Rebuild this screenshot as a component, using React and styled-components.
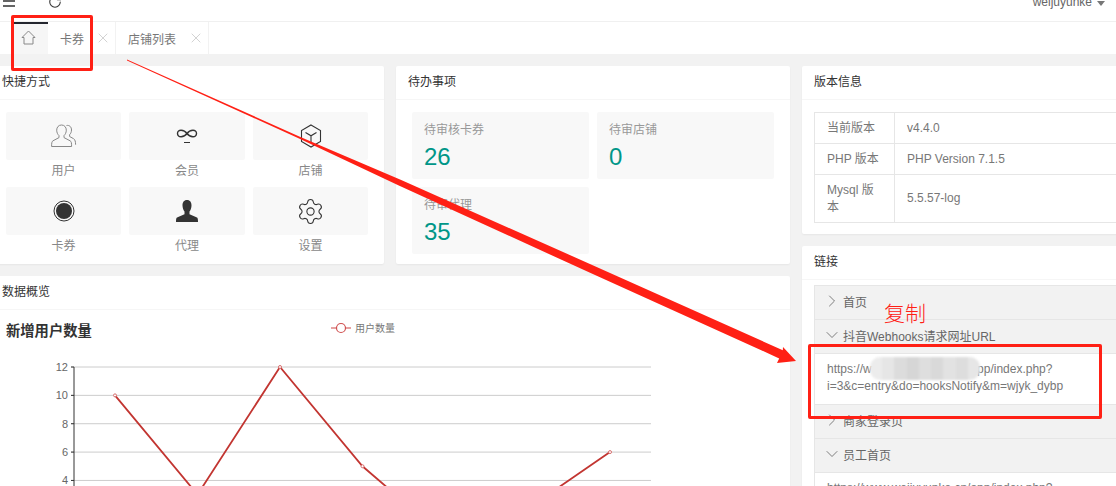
import React from "react";
import styled, { createGlobalStyle } from "styled-components";
import { RotateCw, Settings, X, ChevronRight, ChevronDown } from "lucide-react";

const GlobalStyle = createGlobalStyle`
  html, body {
    margin: 0;
    padding: 0;
    background: #f2f2f2;
  }
  body {
    font-family: "Liberation Sans", "Noto Sans CJK SC", sans-serif;
    font-size: 12px;
    color: #666;
  }
`;

const Page = styled.div`
  position: relative;
  width: 1116px;
  height: 486px;
  overflow: hidden;
  background: #f2f2f2;
`;

// 상단바
const TopBar = styled.div`
  display: flex;
  align-items: center;
  box-sizing: border-box;
  height: 22px;
  padding: 0 11px 18px 2px;
  background: #fff;
  border-bottom: 1px solid #f0f0f0;
`;

const Refresh = styled.span`
  display: flex;
  margin-left: 32px;
  color: #333;
`;

const UserName = styled.span`
  margin-left: auto;
  color: #666;
  line-height: 14px;
`;

const Caret = styled.i`
  width: 0;
  height: 0;
  margin: 3px 0 0 5px;
  border: 4px solid transparent;
  border-top: 5px solid #777;
  border-bottom: 0;
`;

// 탭
const TabBar = styled.div`
  display: flex;
  height: 32px;
  padding-left: 13px;
  background: #fff;
`;

const HomeTab = styled.div`
  display: flex;
  align-items: center;
  justify-content: center;
  box-sizing: border-box;
  width: 35px;
  padding: 0 5px 4px 0;
  background: #f6f6f6;
  border-top: 2px solid #23262e;
`;

const Tab = styled.div`
  display: flex;
  align-items: center;
  box-sizing: border-box;
  width: ${(p) => p.$width}px;
  padding: 0 4px 0 12px;
  border-right: 1px solid #f2f2f2;
  color: #777;
  svg {
    margin-left: auto;
    color: #c8c8c8;
  }
`;

// 본문
const Main = styled.div`
  display: grid;
  grid-template-columns: 800px 394px;
  gap: 12px;
  margin: 12px 0 0 -10px;
`;

const LeftArea = styled.div`
  display: grid;
  grid-template-columns: 394px 394px;
  grid-template-rows: 198px auto;
  gap: 12px;
`;

const RightArea = styled.div`
  display: flex;
  flex-direction: column;
  gap: 12px;
`;

const Card = styled.section`
  grid-column: ${(p) => (p.$wide ? "1 / 3" : "auto")};
  background: #fff;
  border-radius: 2px;
  box-shadow: 0 1px 2px rgba(0, 0, 0, 0.05);
`;

const CardTitle = styled.h2`
  box-sizing: border-box;
  height: 34px;
  margin: 0;
  padding: 0 12px;
  border-bottom: 1px solid #f6f6f6;
  color: #333;
  font-size: 12px;
  font-weight: 400;
  line-height: 32px;
`;

const ShortcutGrid = styled.div`
  display: grid;
  grid-template-columns: 115px 116px 115px;
  column-gap: 8px;
  row-gap: 5px;
  padding: 12px 16px 0;
`;

const Shortcut = styled.div`
  display: flex;
  flex-direction: column;
  color: #888;
  text-align: center;
  line-height: 22px;
`;

const ShortcutIcon = styled.div`
  display: flex;
  align-items: center;
  justify-content: center;
  height: 48px;
  background: #f8f8f8;
  border-radius: 2px;
`;

const TodoGrid = styled.div`
  display: grid;
  grid-template-columns: 177px 177px;
  gap: 8px;
  padding: 12px 16px 0;
`;

const TodoTile = styled.div`
  box-sizing: border-box;
  height: 67px;
  padding: 10px 12px 0;
  background: #f8f8f8;
  border-radius: 2px;
  color: #999;
  line-height: 17px;
`;

const TodoCount = styled.div`
  margin-top: 3px;
  color: #009688;
  font-size: 24px;
  line-height: 30px;
`;

const VersionBody = styled.div`
  padding: 12px 12px 11px;
`;

const VersionTable = styled.table`
  width: 100%;
  border-collapse: collapse;
  td {
    padding: 6.5px 12px;
    border: 1px solid #e6e6e6;
    line-height: 17px;
    color: #777;
  }
  td:first-child {
    width: 55px;
  }
`;

const LinkBody = styled.div`
  padding: 5px 12px 0;
`;

const Accordion = styled.div`
  border: 1px solid #e6e6e6;
  border-bottom: 0;
`;

const AccordionHead = styled.div`
  display: flex;
  align-items: center;
  box-sizing: border-box;
  height: 34px;
  padding: 0 0 3px 7px;
  background: #f2f2f2;
  border-bottom: 1px solid #e6e6e6;
  color: #666;
  svg {
    margin-right: 1px;
    color: #666;
  }
`;

const AccordionContent = styled.div`
  position: relative;
  box-sizing: border-box;
  height: 51px;
  padding: 7px 12px;
  background: #fff;
  border-bottom: 1px solid #e6e6e6;
  color: #777;
  line-height: 17px;
`;

const Smudge = styled.div`
  position: absolute;
  top: 3px;
  left: 55px;
  display: flex;
  width: 110px;
  height: 23px;
  overflow: hidden;
  border-radius: 10px;
  filter: blur(1px);
`;

const SmudgeCell = styled.span`
  flex: 1;
  background: ${(p) => p.$color};
`;

// 표시 (빨간 상자, 화살표)
const RedBox = styled.div`
  position: absolute;
  left: ${(p) => p.$x}px;
  top: ${(p) => p.$y}px;
  width: ${(p) => p.$w}px;
  height: ${(p) => p.$h}px;
  box-sizing: border-box;
  border: 3px solid #ff2015;
  border-radius: 2px;
`;

const CopyNote = styled.div`
  position: absolute;
  left: 884px;
  top: 301px;
  color: #ff2015;
  font-size: 21px;
  font-weight: 300;
  line-height: 26px;
`;

const ArrowLayer = styled.svg`
  position: absolute;
  left: 0;
  top: 0;
  width: 1116px;
  height: 486px;
`;

const ChartSvg = styled.svg`
  display: block;
  width: 800px;
  height: 300px;
`;

const MenuIcon = () => (
  <svg width="14" height="14" viewBox="0 0 14 14" fill="none" stroke="#333" strokeWidth="1.3">
    <path d="M5 1.500h8M1 6h12M1 11h12" />
    <path d="M1 1.500h1.500" />
  </svg>
);

const HomeIcon = () => (
  <svg width="15" height="15" viewBox="0 0 15 15" fill="none" stroke="#888" strokeWidth="1">
    <path d="M7.500 1 L1 7.500 H3 V14 H12 V7.500 H14 Z" />
  </svg>
);

const UsersIcon = () => (
  <svg width="26" height="24" viewBox="0 0 26 24" fill="none" stroke="#888" strokeWidth="1">
    <path d="M10.500 1c-3 0-4.800 2.300-4.800 5.200 0 2.300 1 4.200 2.300 5.400v2L2 16.800C.8 17.500.6 19 .6 22.500h20c0-3.500-.2-5-1.500-5.700l-6.100-3.200v-2c1.300-1.200 2.300-3.100 2.300-5.400C15.300 3.300 13.500 1 10.500 1z" />
    <path d="M15.500 1.500c3-.6 5 1.500 5 4.500 0 2-.8 3.600-1.900 4.700v1.800l4 2.200c1.500 1 2 3 2 6" />
  </svg>
);

const MemberIcon = () => (
  <svg width="22" height="16" viewBox="0 0 22 16" fill="none" stroke="#333" strokeWidth="1.400">
    <path d="M11 5.500C8 1.500 1.500 1 1.500 5.500S8 9.500 11 5.500s9.500-4.500 9.500 0S14 9.500 11 5.500z" />
    <path d="M8 14.500h6" strokeWidth="1" />
  </svg>
);

const ShopIcon = () => (
  <svg width="22" height="24" viewBox="0 0 22 24" fill="none" stroke="#333" strokeWidth="1.100">
    <path d="M11 1 L20.500 6.500 V17.500 L11 23 L1.500 17.500 V6.500 Z" />
    <path d="M5.500 8.500 L11 11.800 L16.500 8.500 M11 11.800 V18" />
  </svg>
);

const CouponIcon = () => (
  <svg width="22" height="22" viewBox="0 0 22 22">
    <circle cx="11" cy="11" r="10" fill="none" stroke="#333" strokeWidth="1" />
    <circle cx="11" cy="11" r="8" fill="#333" />
  </svg>
);

const AgentIcon = () => (
  <svg width="22" height="22" viewBox="0 0 22 22" fill="#333">
    <path d="M11 0C7.800 0 6.500 2.400 6.500 5.500c0 2.500 1 4.800 2 6v2.800L1 17.500C.2 18 0 19.500 0 22h22c0-2.500-.2-4-1-4.500l-7.500-3.200v-2.800c1-1.200 2-3.500 2-6C15.500 2.400 14.200 0 11 0z" />
  </svg>
);

const shortcuts = [
  { label: "用户", icon: <UsersIcon /> },
  { label: "会员", icon: <MemberIcon /> },
  { label: "店铺", icon: <ShopIcon /> },
  { label: "卡券", icon: <CouponIcon /> },
  { label: "代理", icon: <AgentIcon /> },
  { label: "设置", icon: <Settings size={29} strokeWidth={0.9} color="#333" /> },
];

const todos = [
  { label: "待审核卡券", count: 26 },
  { label: "待审店铺", count: 0 },
  { label: "待审代理", count: 35 },
];

const smudgeColors = ["#ececec", "#e6e6e6", "#dcdcdc", "#d6d6d6", "#dedede", "#d9d9d9", "#e2e2e2", "#dddddd", "#e6e6e6"];

// 차트: viewBox 를 화면 좌표에 맞춤
const chartValues = [10, 3, 12, 5, 0, 2, 6];
const chartX = (i) => 115 + i * 82.5;
const chartY = (v) => 367 + (12 - v) * 14.18;
const gridValues = [12, 10, 8, 6, 4, 2, 0];

const Chart = () => (
  <ChartSvg viewBox="-10 310 800 300" fontFamily='"Liberation Sans", "Noto Sans CJK SC", sans-serif'>
    <text x="6" y="336" fontSize="14.300" fontWeight="700" fill="#333">新增用户数量</text>
    <path d="M331 328h20" stroke="#d87070" strokeWidth="1.300" />
    <circle cx="341" cy="328" r="4.500" fill="#fff" stroke="#d05050" strokeWidth="1.200" />
    <text x="355" y="332" fontSize="10" fill="#777">用户数量</text>
    {gridValues.map((v) => (
      <g key={v}>
        <path d={`M71 ${chartY(v)}H651`} stroke="#ccc" strokeWidth="1" />
        <path d={`M71 ${chartY(v)}H74`} stroke="#333" strokeWidth="1" />
        <text x="68" y={chartY(v) + 4} fontSize="11" fill="#666" textAnchor="end">{v}</text>
      </g>
    ))}
    <path d={`M74 367V${chartY(0)}`} stroke="#333" strokeWidth="1" />
    <polyline
      points={chartValues.map((v, i) => `${chartX(i)},${chartY(v)}`).join(" ")}
      fill="none"
      stroke="#c23531"
      strokeWidth="1.800"
    />
    {chartValues.map((v, i) => (
      <circle key={i} cx={chartX(i)} cy={chartY(v)} r="1.500" fill="#fff" stroke="#d87070" strokeWidth="1" />
    ))}
  </ChartSvg>
);

const App = () => (
  <Page>
    <GlobalStyle />
    <TopBar>
      <MenuIcon />
      <Refresh>
        <RotateCw size={14} strokeWidth={1.800} />
      </Refresh>
      <UserName>weijuyunke</UserName>
      <Caret />
    </TopBar>

    <TabBar>
      <HomeTab>
        <HomeIcon />
      </HomeTab>
      <Tab $width={68}>
        卡券
        <X size={16} strokeWidth={1.200} />
      </Tab>
      <Tab $width={93}>
        店铺列表
        <X size={16} strokeWidth={1.200} />
      </Tab>
    </TabBar>

    <Main>
      <LeftArea>
        <Card>
          <CardTitle>快捷方式</CardTitle>
          <ShortcutGrid>
            {shortcuts.map((item) => (
              <Shortcut key={item.label}>
                <ShortcutIcon>{item.icon}</ShortcutIcon>
                {item.label}
              </Shortcut>
            ))}
          </ShortcutGrid>
        </Card>

        <Card>
          <CardTitle>待办事项</CardTitle>
          <TodoGrid>
            {todos.map((item) => (
              <TodoTile key={item.label}>
                {item.label}
                <TodoCount>{item.count}</TodoCount>
              </TodoTile>
            ))}
          </TodoGrid>
        </Card>

        <Card $wide>
          <CardTitle>数据概览</CardTitle>
          <Chart />
        </Card>
      </LeftArea>

      <RightArea>
        <Card>
          <CardTitle>版本信息</CardTitle>
          <VersionBody>
            <VersionTable>
              <tbody>
                <tr>
                  <td>当前版本</td>
                  <td>v4.4.0</td>
                </tr>
                <tr>
                  <td>PHP 版本</td>
                  <td>PHP Version 7.1.5</td>
                </tr>
                <tr>
                  <td>Mysql 版本</td>
                  <td>5.5.57-log</td>
                </tr>
              </tbody>
            </VersionTable>
          </VersionBody>
        </Card>

        <Card>
          <CardTitle>链接</CardTitle>
          <LinkBody>
            <Accordion>
              <AccordionHead>
                <ChevronRight size={20} strokeWidth={1} />
                首页
              </AccordionHead>
              <AccordionHead>
                <ChevronDown size={20} strokeWidth={1} />
                抖音Webhooks请求网址URL
              </AccordionHead>
              <AccordionContent>
                https://www.weijuyunke.cn/app/index.php?i=3&amp;c=entry&amp;do=hooksNotify&amp;m=wjyk_dybp
                <Smudge>
                  {smudgeColors.map((color, i) => (
                    <SmudgeCell key={i} $color={color} />
                  ))}
                </Smudge>
              </AccordionContent>
              <AccordionHead>
                <ChevronRight size={20} strokeWidth={1} />
                商家登录页
              </AccordionHead>
              <AccordionHead>
                <ChevronDown size={20} strokeWidth={1} />
                员工首页
              </AccordionHead>
              <AccordionContent>
                https://www.weijuyunke.cn/app/index.php?i=3&amp;c=entry&amp;do=staff&amp;m=wjyk_dybp
              </AccordionContent>
            </Accordion>
          </LinkBody>
        </Card>
      </RightArea>
    </Main>

    <RedBox $x={11} $y={15} $w={82} $h={56} />
    <RedBox $x={808} $y={344} $w={294} $h={75} />
    <CopyNote>复制</CopyNote>
    <ArrowLayer viewBox="0 0 1116 486">
      <polygon
        fill="#ff2015"
        points="127,59.500 300.400,136.900 401.200,180.100 591.600,264.700 782.800,350.200 783,347 796,361 777,363 779.200,358.400 588.400,272 398.800,185.600 299.600,138.800 127,60.500"
      />
    </ArrowLayer>
  </Page>
);

export default App;
